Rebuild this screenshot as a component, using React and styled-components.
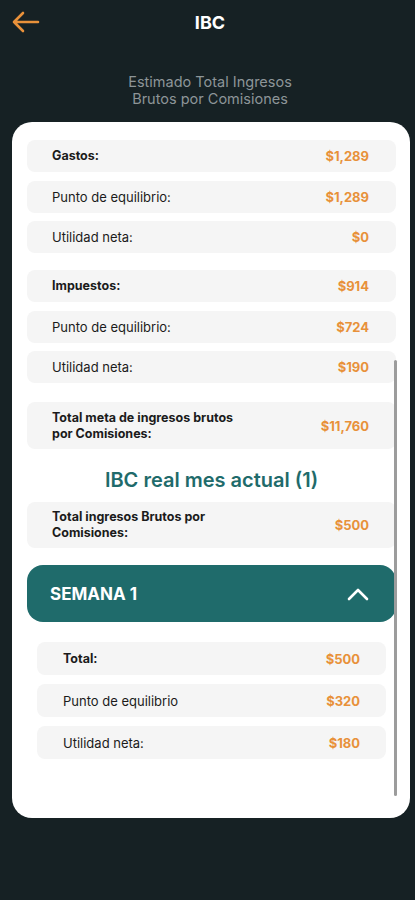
import React from 'react';
import styled, { createGlobalStyle } from 'styled-components';

const GlobalStyle = createGlobalStyle`
	body {
		margin: 0;
		background: #162124;
		font-family: Inter, "Noto Sans", sans-serif;
	}
`;

const Screen = styled.div`
	width: 415px;
	height: 900px;
	background: #162124;
	display: flex;
	flex-direction: column;
	overflow: hidden;
`;

const TopBar = styled.div`
	height: 44px;
	display: flex;
	align-items: center;
	justify-content: center;
	position: relative;
`;

const BackButton = styled.div`
	position: absolute;
	left: 11px;
	top: 10px;
	width: 30px;
	height: 26px;
	display: flex;
`;

const Title = styled.div`
	color: #fff;
	font-size: 18px;
	font-weight: 700;
	margin-left: 5px;
`;

const Subtitle = styled.div`
	color: #8d9598;
	font-size: 14.5px;
	font-weight: 400;
	text-align: center;
	line-height: 17px;
	margin-top: 29px;
	margin-left: 5px;
`;

const Card = styled.div`
	position: relative;
	margin: 15px 5px 0 12px;
	height: 696px;
	background: #fff;
	border-radius: 20px;
	padding: 18px 14px 0 15px;
	box-sizing: border-box;
	display: flex;
	flex-direction: column;
`;

const Group = styled.div`
	display: flex;
	flex-direction: column;
	gap: ${p => p.$gap || 8.5}px;
	margin-bottom: ${p => p.$after || 0}px;
`;

const Row = styled.div`
	height: ${p => p.$h || 32}px;
	background: #f5f5f5;
	border-radius: 8px;
	display: flex;
	align-items: center;
	justify-content: space-between;
	padding: 0 27px 0 25px;
	box-sizing: border-box;
`;

const Label = styled.span`
	color: #1b1b1b;
	font-size: ${p => (p.$bold ? 12.5 : 13)}px;
	font-weight: ${p => (p.$bold ? 700 : 400)};
	line-height: 16px;
	max-width: ${p => p.$max || 240}px;
`;

const Value = styled.span`
	color: #e8913a;
	font-size: 13px;
	font-weight: 700;
`;

const SectionTitle = styled.div`
	color: #1f6b6b;
	font-size: 20px;
	font-weight: 600;
	text-align: center;
	margin: 19px 0 10px;
`;

const WeekHeader = styled.div`
	height: 57px;
	margin-top: 17px;
	background: #1f6b6b;
	border-radius: 16px;
	display: flex;
	align-items: center;
	justify-content: space-between;
	padding: 0 27px 0 23px;
`;

const WeekTitle = styled.span`
	color: #fff;
	font-size: 17px;
	font-weight: 700;
`;

const WeekBody = styled.div`
	display: flex;
	flex-direction: column;
	gap: 9px;
	padding: 20px 10px 0;
`;

const SubRow = styled(Row)`
	height: 33px;
	padding: 0 26px 0 26px;
`;

const ScrollThumb = styled.div`
	position: absolute;
	left: 382px;
	top: 238px;
	width: 3px;
	height: 436px;
	background: #9c9c9c;
	border-radius: 2px;
`;

const Line = ({ label, value, bold, h, max }) => (
	<Row $h={h}>
		<Label $bold={bold} $max={max}>{label}</Label>
		<Value>{value}</Value>
	</Row>
);

function App() {
	return (
		<Screen>
			<GlobalStyle />
			<TopBar>
				<BackButton>
					<svg width="30" height="26" viewBox="0 0 30 26" fill="none" stroke="#e8913a" strokeWidth="2.6" strokeLinecap="round" strokeLinejoin="round">
						<path d="M3 12h24M12 3l-9 9 9 9" />
					</svg>
				</BackButton>
				<Title>IBC</Title>
			</TopBar>
			<Subtitle>
				Estimado Total Ingresos
				<br />
				Brutos por Comisiones
			</Subtitle>
			<Card>
				<Group $after={17}>
					<Line label="Gastos:" value="$1,289" bold />
					<Line label="Punto de equilibrio:" value="$1,289" />
					<Line label="Utilidad neta:" value="$0" />
				</Group>
				<Group $after={19}>
					<Line label="Impuestos:" value="$914" bold />
					<Line label="Punto de equilibrio:" value="$724" />
					<Line label="Utilidad neta:" value="$190" />
				</Group>
				<Line label="Total meta de ingresos brutos por Comisiones:" value="$11,760" bold h={47} max={190} />
				<SectionTitle>IBC real mes actual (1)</SectionTitle>
				<Line label="Total ingresos Brutos por Comisiones:" value="$500" bold h={46} max={190} />
				<WeekHeader>
					<WeekTitle>SEMANA 1</WeekTitle>
					<svg width="22" height="14" viewBox="0 0 22 14" fill="none" stroke="#fff" strokeWidth="2.6" strokeLinecap="round" strokeLinejoin="round">
						<path d="M2 12l9-9 9 9" />
					</svg>
				</WeekHeader>
				<WeekBody>
					<SubRow>
						<Label $bold>Total:</Label>
						<Value>$500</Value>
					</SubRow>
					<SubRow>
						<Label>Punto de equilibrio</Label>
						<Value>$320</Value>
					</SubRow>
					<SubRow>
						<Label>Utilidad neta:</Label>
						<Value>$180</Value>
					</SubRow>
				</WeekBody>
				<ScrollThumb />
			</Card>
		</Screen>
	);
}

export default App;
